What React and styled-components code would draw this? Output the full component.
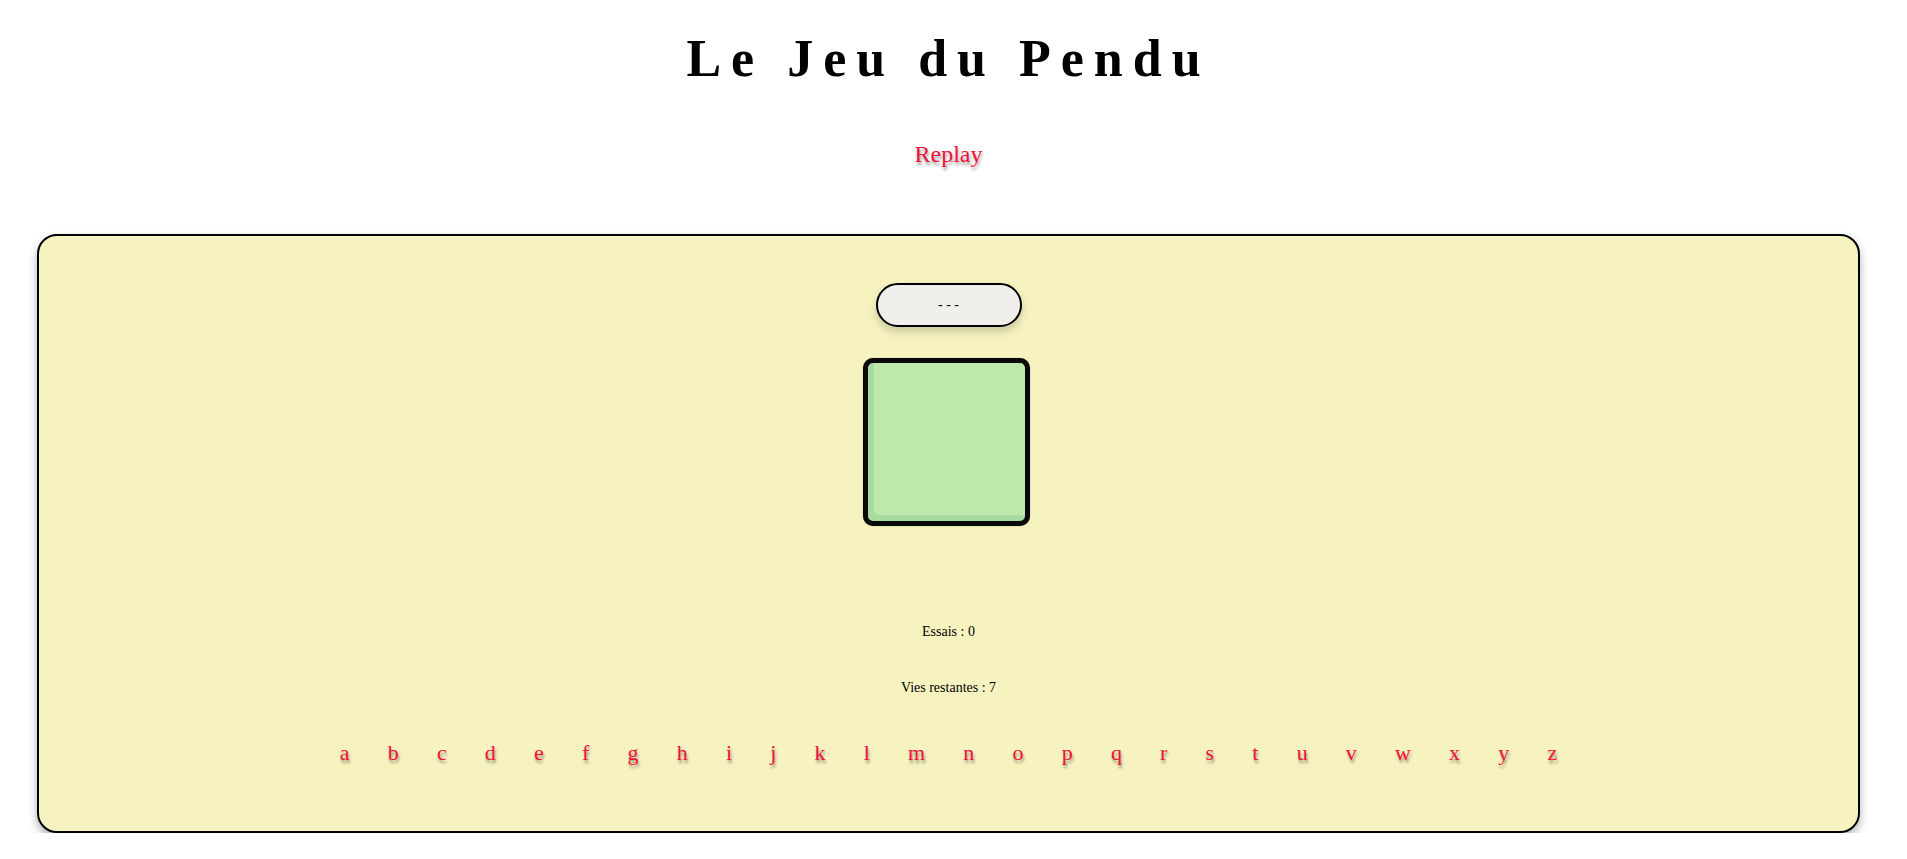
import React from 'react';
import styled, { createGlobalStyle } from 'styled-components';

const GlobalStyle = createGlobalStyle`
  body {
    margin: 8px;
    background: #ffffff;
    font-family: "Liberation Serif", "Times New Roman", serif;
  }
`;

const Header = styled.header`
  display: flex;
  flex-direction: column;
  align-items: center;
  padding: 21px 10px 0 0;
`;

const Title = styled.h1`
  margin: 0;
  font-size: 52px;
  font-weight: bold;
  letter-spacing: 10px;
  line-height: 60px;
  color: #000;
`;

const Replay = styled.button`
  margin-top: 52px;
  background: none;
  border: none;
  padding: 0;
  font-family: inherit;
  font-size: 24px;
  line-height: 27px;
  color: #f2113c;
  text-shadow: 1px 3px 3px rgba(0, 0, 0, 0.4);
  cursor: pointer;
`;

const Board = styled.main`
  box-sizing: border-box;
  width: 1823px;
  height: 599px;
  margin: 66px 0 0 29px;
  background: #f7f3c1;
  border: 2px solid #000;
  border-radius: 20px;
  box-shadow: 0 5px 10px rgba(0, 0, 0, 0.3);
  display: flex;
  flex-direction: column;
  align-items: center;
  padding-top: 47px;
`;

const Word = styled.div`
  box-sizing: border-box;
  width: 146px;
  height: 44px;
  border: 2px solid #000;
  border-radius: 22px;
  background: #f0efeb;
  box-shadow: 0 5px 8px rgba(0, 0, 0, 0.18);
  display: flex;
  align-items: center;
  justify-content: center;
  font-size: 14px;
  color: #000;
`;

const Gallows = styled.div`
  box-sizing: border-box;
  width: 167px;
  height: 168px;
  margin-top: 31px;
  margin-left: -4px;
  border: 5px solid #0a0a0a;
  border-radius: 10px;
  background: #bfe9aa;
  box-shadow: inset 6px -6px 0 #a6dc9f, 0 0 1px rgba(0, 0, 0, 0.6);
`;

const Stat = styled.p`
  margin: ${(p) => p.$top}px 0 0;
  font-size: 14px;
  line-height: 16px;
  color: #000;
`;

const Letters = styled.div`
  display: flex;
  margin-top: 44px;
`;

const Letter = styled.button`
  background: none;
  border: none;
  padding: 0 19.1px;
  font-family: inherit;
  font-size: 22px;
  line-height: 25px;
  color: #f2113c;
  text-shadow: 1px 3px 3px rgba(0, 0, 0, 0.4);
  cursor: pointer;
`;

const alphabet = 'abcdefghijklmnopqrstuvwxyz'.split('');

const App = () => {
  return (
    <>
      <GlobalStyle />
      <Header>
        <Title>Le Jeu du Pendu</Title>
        <Replay>Replay</Replay>
      </Header>
      <Board>
        <Word>- - -</Word>
        <Gallows />
        <Stat $top={98}>Essais : 0</Stat>
        <Stat $top={40}>Vies restantes : 7</Stat>
        <Letters>
          {alphabet.map((l) => (
            <Letter key={l}>{l}</Letter>
          ))}
        </Letters>
      </Board>
    </>
  );
};

export default App;
